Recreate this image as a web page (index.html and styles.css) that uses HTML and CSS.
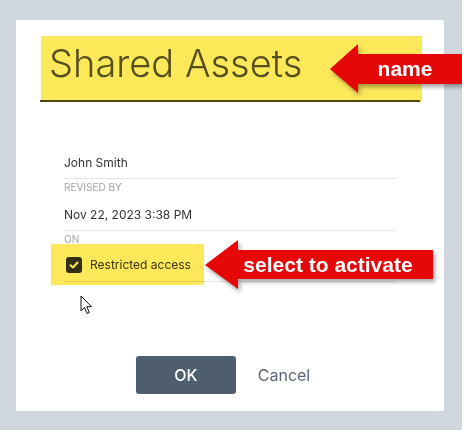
FILE: index.html
```html
<!DOCTYPE html>
<html lang="en">

<head>
    <meta charset="UTF-8">
    <meta name="viewport" content="width=device-width, initial-scale=1.0">
    <title>Shared Assets</title>
    <link rel="stylesheet" href="styles.css">
</head>

<body>

    <div class="panel">
        <h1 class="title">Shared Assets</h1>

        <div class="fields">
            <div class="field">
                <div class="value">John Smith</div>
                <div class="label">Revised by</div>
            </div>
            <div class="field">
                <div class="value">Nov 22, 2023 3:38 PM</div>
                <div class="label">On</div>
            </div>
            <label class="check-row">
                <span class="checkbox">
                    <svg width="10" height="8" viewBox="0 0 10 8">
                        <path d="M1.5 4.2 L4 6.5 L8.5 1.5" fill="none" stroke="#fff" stroke-width="2" stroke-linecap="round" stroke-linejoin="round"/>
                    </svg>
                </span>
                Restricted access
            </label>
        </div>

        <div class="buttons">
            <button class="btn-ok">OK</button>
            <button class="btn-cancel">Cancel</button>
        </div>

        <div class="highlight hl-title"></div>
        <div class="highlight hl-check"></div>
    </div>

    <svg class="cursor" width="13" height="20" viewBox="0 0 13 20">
        <path d="M1 1 L1 16 L4.5 12.5 L7 18.5 L9.3 17.5 L6.8 11.7 L11.5 11.7 Z" fill="#fff" stroke="#111" stroke-width="1" stroke-linejoin="round"/>
    </svg>

    <svg class="callouts" width="462" height="430" viewBox="0 0 462 430">
        <polygon points="330,69 358,44 358,54 462,54 462,84 358,84 358,93" fill="#e60808"/>
        <text x="405" y="76" text-anchor="middle" class="callout-text">name</text>
        <polygon points="205,265 238,240 238,250 433,250 433,279 238,279 238,289" fill="#e60808"/>
        <text x="328" y="272" text-anchor="middle" class="callout-text">select to activate</text>
    </svg>

</body>

</html>
```

FILE: styles.css
```css
*{
    margin: 0;
    box-sizing: border-box;
}
body{
    width: 462px;
    height: 430px;
    overflow: hidden;
    background: #cfd6dd;
    font-family: Inter, "Noto Sans", sans-serif;
    padding: 20px 18px 19px 16px;
    position: relative;
}
.panel{
    position: relative;
    background: #fff;
    height: 391px;
    padding: 0 48px;
}
.title{
    margin: 0 -24px;
    padding: 21px 0 15px 9px;
    font-size: 38px;
    line-height: 44px;
    font-weight: 300;
    color: #555;
    border-bottom: 2px solid #4e4e2c;
    width: 380px;
}
.fields{
    margin-top: 53px;
}
.field{
    margin-bottom: 14px;
}
.value{
    font-size: 12px;
    line-height: 16px;
    color: #333;
    padding-bottom: 7px;
    border-bottom: 1px solid #e6e6e6;
}
.label{
    margin-top: 2px;
    font-size: 10px;
    line-height: 12px;
    color: #a3a3a3;
    text-transform: uppercase;
}
.field:nth-child(2){
    margin-bottom: 0;
}
.check-row{
    display: flex;
    align-items: center;
    gap: 8px;
    padding: 12px 0 8px 2px;
    font-size: 12px;
    line-height: 16px;
    color: #3a3a3a;
    border-bottom: 1px solid #e6e6e6;
}
.checkbox{
    width: 16px;
    height: 16px;
    border-radius: 3px;
    background: #333;
    display: flex;
    align-items: center;
    justify-content: center;
}
.buttons{
    display: flex;
    justify-content: center;
    margin-top: 74px;
    margin-left: -2px;
}
button{
    font-family: Inter, "Noto Sans", sans-serif;
    font-size: 16px;
    height: 38px;
    border: none;
    cursor: pointer;
}
.btn-ok{
    width: 100px;
    background: #4f5e6e;
    color: #fff;
    font-weight: 500;
    border-radius: 3px;
}
.btn-cancel{
    background: none;
    color: #5b6778;
    padding: 0 12px;
    margin-left: 10px;
}
.highlight{
    position: absolute;
    background: #fde85a;
    mix-blend-mode: multiply;
}
.hl-title{
    left: 25px;
    top: 16px;
    width: 381px;
    height: 66px;
}
.hl-check{
    left: 35px;
    top: 224px;
    width: 153px;
    height: 41px;
}
.cursor{
    position: absolute;
    left: 80px;
    top: 295px;
}
.callouts{
    position: absolute;
    left: 0;
    top: 0;
    filter: drop-shadow(2px 3px 2px rgba(0, 0, 0, 0.35));
}
.callout-text{
    font-family: "Liberation Sans", Arial, sans-serif;
    font-weight: bold;
    font-size: 21px;
    fill: #fff;
}
```
